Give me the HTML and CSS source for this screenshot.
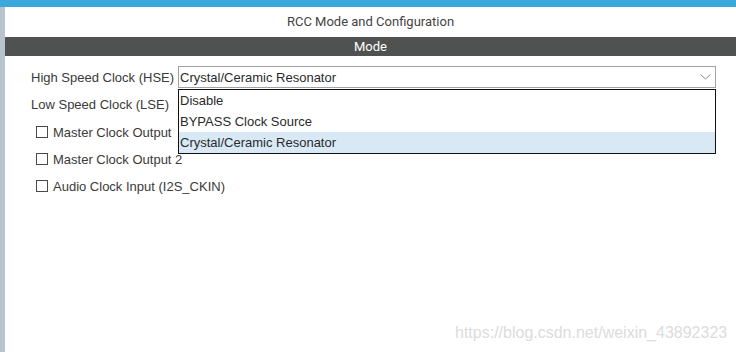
FILE: index.html
```html
<!DOCTYPE html>
<html lang="en">
<head>
    <meta charset="UTF-8">
    <title>RCC Mode and Configuration</title>
    <link rel="stylesheet" href="styles.css">
</head>
<body>
    <div class="topbar"></div>
    <div class="main">
        <div class="side"></div>
        <div class="panel">
            <div class="title">RCC Mode and Configuration</div>
            <div class="section-head">Mode</div>
            <div class="form">
                <div class="row">
                    <label class="label">High Speed Clock (HSE)</label>
                    <div class="select-wrap">
                        <div class="select">
                            <span>Crystal/Ceramic Resonator</span>
                            <svg class="chevron" width="11" height="6" viewBox="0 0 11 6">
                                <path d="M0.5 0.5 L5.5 5 L10.5 0.5" fill="none" stroke="#8a8a8a" stroke-width="1"/>
                            </svg>
                        </div>
                        <ul class="dropdown">
                            <li>Disable</li>
                            <li>BYPASS Clock Source</li>
                            <li class="active">Crystal/Ceramic Resonator</li>
                        </ul>
                    </div>
                </div>
                <div class="row">
                    <label class="label">Low Speed Clock (LSE)</label>
                    <div class="select-wrap">
                        <!-- covered by the open HSE list -->
                        <div class="select"></div>
                    </div>
                </div>
                <div class="checks">
                    <div class="check"><span class="box"></span>Master Clock Output</div>
                    <div class="check"><span class="box"></span>Master Clock Output 2</div>
                    <div class="check"><span class="box"></span>Audio Clock Input (I2S_CKIN)</div>
                </div>
            </div>
        </div>
    </div>
    <div class="watermark">https://blog.csdn.net/weixin_43892323</div>
</body>
</html>
```

FILE: styles.css
```css
/* Base */
* {
    box-sizing: border-box;
    margin: 0;
    padding: 0;
}

body {
    font-family: "Liberation Sans", Arial, sans-serif;
    font-size: 13px;
    color: #3a3a3a;
    background: #fff;
    width: 736px;
    height: 352px;
    overflow: hidden;
}

.topbar {
    height: 7px;
    background-color: #3aa8dc;
}

.main {
    display: flex;
    height: 345px;
}

.side {
    width: 5px;
    background-color: #b8c4cc;
}

.panel {
    flex: 1;
}

.title {
    height: 30px;
    line-height: 30px;
    text-align: center;
    font-family: Roboto, sans-serif;
    color: #444;
}

.section-head {
    height: 19px;
    line-height: 19px;
    text-align: center;
    font-family: Roboto, sans-serif;
    background-color: #505251;
    color: #fff;
}

/* Form rows */
.form {
    display: flex;
    flex-direction: column;
    gap: 5px;
    padding: 10px 20px 0 26px;
}

.row {
    display: flex;
    align-items: center;
    height: 22px;
}

.label {
    width: 147px;
    flex-shrink: 0;
}

.select-wrap {
    position: relative;
    flex: 1;
    height: 22px;
}

.select {
    display: flex;
    align-items: center;
    justify-content: space-between;
    height: 22px;
    padding: 0 4px 0 1px;
    border: 1px solid #a2a2a2;
    color: #2a2a2a;
}

/* Open list (sits over the LSE row) */
.dropdown {
    position: absolute;
    top: 23px;
    left: 0;
    right: 0;
    list-style: none;
    border: 1px solid #111;
    background: #fff;
    z-index: 2;
}

.dropdown li {
    height: 21px;
    line-height: 21px;
    padding-left: 1px;
    color: #2a2a2a;
}

.dropdown li.active {
    background-color: #d9e8f5;
}

/* Checkboxes */
.checks {
    display: flex;
    flex-direction: column;
    gap: 5px;
    margin-top: 1px;
}

.check {
    display: flex;
    align-items: center;
    height: 22px;
    padding-left: 5px;
}

.box {
    width: 12px;
    height: 12px;
    border: 1px solid #4a4a4a;
    margin-right: 5px;
    background: #fff;
}

.watermark {
    position: absolute;
    left: 455px;
    top: 324px;
    font-size: 16px;
    color: #dcdcdc;
}
```
